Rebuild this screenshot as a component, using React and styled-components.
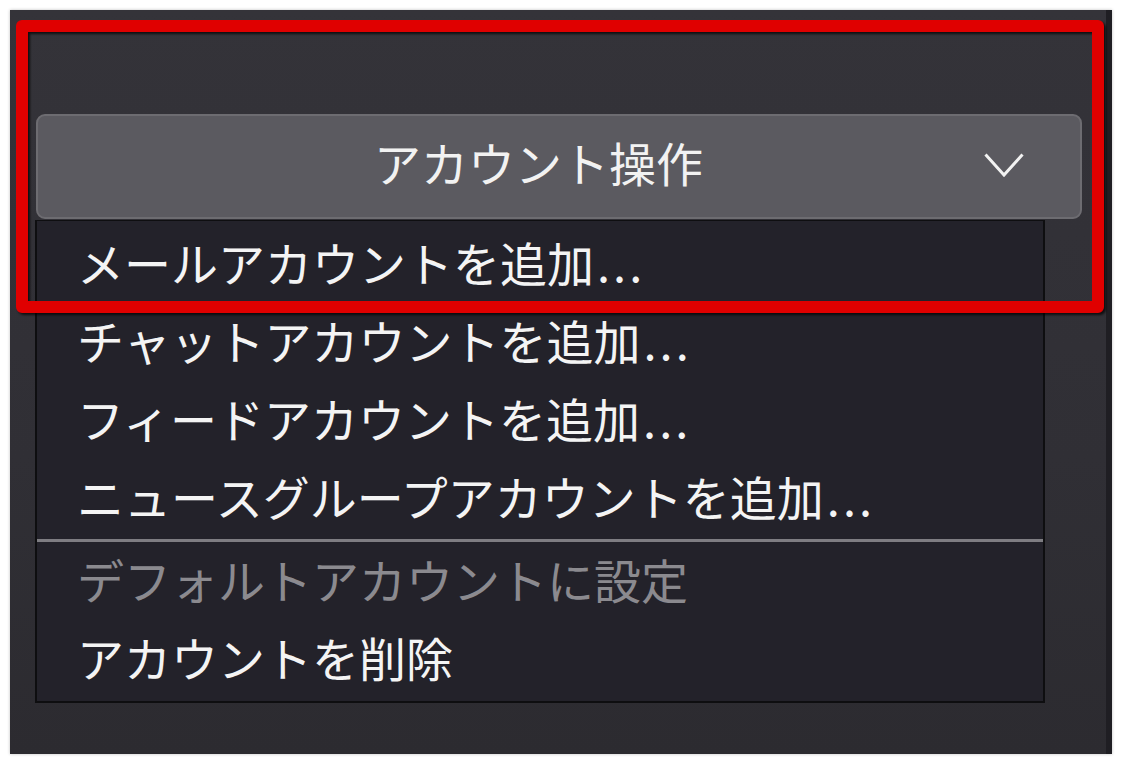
import styled, { createGlobalStyle } from "styled-components";

const GlobalStyle = createGlobalStyle`
  html, body {
    margin: 0;
    padding: 0;
    background: #ffffff;
  }
  body {
    font-family: "Noto Sans CJK JP", "Noto Sans", sans-serif;
  }
`;

const items = [
  { label: "メールアカウントを追加", more: true },
  { label: "チャットアカウントを追加", more: true },
  { label: "フィードアカウントを追加", more: true },
  { label: "ニュースグループアカウントを追加", more: true, divider: true },
  { label: "デフォルトアカウントに設定", disabled: true },
  { label: "アカウントを削除" },
];

const App = () => {
  return (
    <>
      <GlobalStyle />
      <Page>
        <Frame>
          <Highlight />
          <Select>
            <SelectLabel>アカウント操作</SelectLabel>
            <Chevron viewBox="0 0 40 26">
              <polyline points="1.5,1.5 20,22 38.5,1.5" />
            </Chevron>
          </Select>
          <Menu>
            {items.map((item) => (
              <div key={item.label}>
                <MenuItem $disabled={item.disabled}>
                  {item.label}
                  {item.more && <Dots>...</Dots>}
                </MenuItem>
                {item.divider && <Divider />}
              </div>
            ))}
          </Menu>
        </Frame>
      </Page>
    </>
  );
};

const Page = styled.div`
  width: 1122px;
  height: 764px;
  padding: 10px;
  box-sizing: border-box;
`;

const Frame = styled.div`
  position: relative;
  width: 1102px;
  height: 744px;
  box-sizing: border-box;
  padding: 104px 24px 0 26px;
  background: linear-gradient(180deg, #343339 0%, #302f35 60%, #2c2b30 100%);
  border-right: 6px solid #1f1e23;
  box-shadow: 0 0 3px rgba(0, 0, 0, 0.25);
`;

const Highlight = styled.div`
  position: absolute;
  left: 6px;
  top: 10px;
  width: 1088px;
  height: 293px;
  box-sizing: border-box;
  border: 12px solid #e00000;
  border-radius: 6px;
  filter: drop-shadow(2px 2px 1px rgba(0, 0, 0, 0.7));
  pointer-events: none;
  z-index: 2;
`;

const Select = styled.div`
  display: grid;
  grid-template-columns: 1fr 40px;
  align-items: center;
  width: 1046px;
  height: 105px;
  box-sizing: border-box;
  padding: 0 56px 0 55px;
  background: #5b5a60;
  border: 2px solid #6d6c71;
  border-radius: 9px;
  color: #f2f2f2;
`;

const SelectLabel = styled.span`
  text-align: center;
  font-size: 47px;
  line-height: 1;
  margin-bottom: 10px;
`;

const Chevron = styled.svg`
  width: 40px;
  height: 26px;
  fill: none;
  stroke: #f2f2f2;
  stroke-width: 3;
  margin-bottom: 2px;
`;

const Menu = styled.div`
  width: 1010px;
  margin-top: 1px;
  margin-left: -1px;
  box-sizing: border-box;
  padding: 5px 0 2px;
  background: #23222a;
  border: 2px solid #0e0e10;
  border-top-width: 1px;
`;

const MenuItem = styled.div`
  height: 78px;
  line-height: 72px;
  padding-left: 40px;
  font-size: 47px;
  white-space: nowrap;
  color: ${(p) => (p.$disabled ? "#8b8a8f" : "#f4f4f4")};
`;

const Dots = styled.span`
  margin-left: 3px;
  letter-spacing: 3px;
`;

const Divider = styled.div`
  height: 3px;
  margin: 1px 0;
  background: #7e7d82;
`;

export default App;
